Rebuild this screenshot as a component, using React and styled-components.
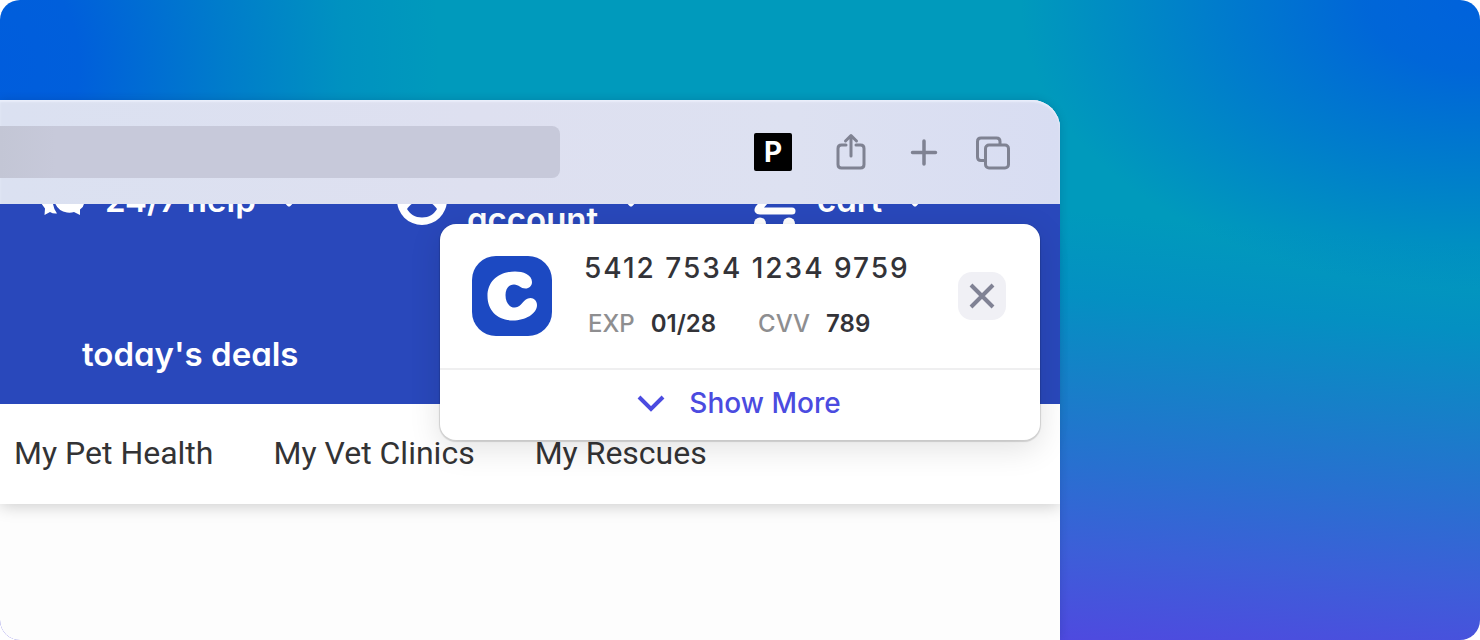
import React from "react";
import styled, { createGlobalStyle } from "styled-components";

const GlobalStyle = createGlobalStyle`
  * { box-sizing: border-box; }
  body { margin: 0; background: #fff; font-family: Inter, "Liberation Sans", sans-serif; }
  button { font: inherit; border: 0; padding: 0; cursor: pointer; }
  a { color: inherit; text-decoration: none; }
  svg { display: block; flex: none; }
`;

const Stage = styled.main`
  min-height: 100vh;
  display: flex;
  padding: 100px 420px 0 0;
  overflow: hidden;
  border-radius: 20px;
  background:
    radial-gradient(ellipse 440px 560px at 0% 10%, #005ddd 0%, #005fdb 18%, rgba(0, 98, 216, 0.55) 50%, rgba(0, 98, 216, 0.15) 78%, rgba(0, 98, 216, 0) 100%),
    radial-gradient(ellipse 460px 290px at 100% 0%, #0062dc 0%, rgba(0, 98, 218, 0.92) 25%, rgba(0, 98, 218, 0.5) 60%, rgba(0, 98, 218, 0) 100%),
    linear-gradient(185deg, #009abc 32%, #0490c2 43%, #1680c8 54%, #2870d0 65%, #3c5fd8 76%, #5048e0 89%);
`;

const Browser = styled.section`
  position: relative;
  flex: 1;
  display: flex;
  flex-direction: column;
  min-width: 0;
  background: #fdfdfd;
  border-radius: 0 28px 0 0;
  box-shadow: 0 0 8px rgba(0, 40, 90, 0.2);
`;

const Toolbar = styled.header`
  display: flex;
  align-items: center;
  justify-content: space-between;
  height: 104px;
  padding-right: 49px;
  border-radius: 0 28px 0 0;
  background: linear-gradient(90deg, #dbe1f1, #dee0f0 45%, #dde1f1 75%, #d8ddf2);
  box-shadow: inset 0 2px 2px rgba(240, 244, 255, 0.7);
`;

const AddressBar = styled.input`
  width: 560px;
  height: 52px;
  padding: 0 16px;
  border: 0;
  border-radius: 0 8px 8px 0;
  background: linear-gradient(90deg, #c3c6d5, #c7c9da 10%);
  font: 24px Inter, sans-serif;
`;

const Tools = styled.div`
  display: flex;
  align-items: center;
  gap: 37px;
`;

const ToolButton = styled.button`
  display: grid;
  place-items: center;
  width: ${(p) => p.$width}px;
  height: 40px;
  background: none;
  color: #7f8292;
`;

const PassButton = styled.button`
  width: 38px;
  height: 38px;
  border-radius: 2px;
  background: #000;
  color: #fff;
  font-size: 28px;
  font-weight: 700;
  line-height: 38px;
`;

const StoreHeader = styled.div`
  height: 200px;
  overflow: hidden;
  background: #2948bb;
  color: #fff;
  font-size: 33px;
  font-weight: 600;
  line-height: 40px;
  font-feature-settings: "cv11";
`;

const AccountRow = styled.div`
  display: grid;
  grid-template-columns: repeat(3, 356px);
  height: 56px;
  margin: -32px 0 0 41px;
`;

const AccountLink = styled.a`
  display: flex;
  align-items: center;
  gap: 20px;
  height: 56px;
`;

const AccountLabel = styled.span`
  padding-top: ${(p) => (p.$secondLine ? "38px" : "0")};
  padding-right: 4px;
  white-space: nowrap;
`;

const Deals = styled.a`
  display: inline-block;
  margin: 106px 0 0 82px;
`;

const PetNav = styled.nav`
  display: flex;
  gap: 60px;
  height: 100px;
  padding: 30px 0 0 14px;
  background: #fff;
  box-shadow: 0 2px 16px rgba(0, 0, 0, 0.2);
  clip-path: inset(0 0 -40px 0);
  color: #333335;
  font: 32px/38px Roboto, sans-serif;
  white-space: nowrap;
`;

const CardPopover = styled.aside`
  position: absolute;
  top: 124px;
  right: 20px;
  width: 600px;
  border-radius: 16px;
  background: #fff;
  box-shadow: 0 1px 1px 1px rgba(0, 0, 0, 0.14), 0 8px 32px rgba(0, 0, 0, 0.12);
`;

const CardTop = styled.div`
  display: flex;
  align-items: center;
  height: 144px;
  padding: 0 34px 0 32px;
`;

const CardInfo = styled.div`
  flex: 1;
  display: flex;
  flex-direction: column;
  gap: 24px;
  padding-left: 32px;
`;

const CardNumber = styled.div`
  color: #333338;
  font-size: 28px;
  font-weight: 500;
  line-height: 32px;
  letter-spacing: 2px;
  white-space: nowrap;
`;

const Details = styled.dl`
  display: flex;
  gap: 42px;
  margin: 0;
  padding-left: 4px;
  font-size: 24px;
  font-weight: 500;
  line-height: 32px;
`;

const Detail = styled.div`
  display: flex;
  gap: 16px;
  dt { color: #8e8e90; }
  dd { margin: 0; color: #333338; font-weight: 600; }
`;

const CloseButton = styled.button`
  display: grid;
  place-items: center;
  width: 48px;
  height: 48px;
  border-radius: 14px;
  background: #f0f0f5;
  color: #808294;
`;

const ShowMore = styled.button`
  display: flex;
  align-items: center;
  justify-content: center;
  gap: 24px;
  width: 100%;
  height: 72px;
  padding: 0 2px 4px 0;
  border-top: 2px solid #efeff0;
  border-radius: 0 0 16px 16px;
  background: none;
  color: #4b4be0;
  font-size: 28px;
  font-weight: 500;
`;

const SmallChevron = () => (
  <svg width="18" height="18" viewBox="0 0 18 18" fill="none" stroke="currentColor" strokeWidth="4" aria-hidden="true">
    <path d="M3 7.500l6 6 6-6" strokeLinecap="round" strokeLinejoin="round" />
  </svg>
);

const ChatIcon = () => (
  <svg width="44" height="56" viewBox="0 0 44 56" fill="currentColor" aria-hidden="true">
    <path d="M0 31C-1 12 14 6 26 12C16 16 10 24 12 32Q13 38 16 41.500Q12 42 9 40L3.500 43L4 36.500Z" />
    <path d="M14 31C14 22 20 17 28 17S43 23 43 31Q43 35 39 37.500L39 43L33 40Q30 41 26 40.500Q17 39 14 31Z" />
  </svg>
);

const PersonIcon = () => (
  <svg width="50" height="50" viewBox="0 0 50 50" fill="none" aria-hidden="true">
    <circle cx="25" cy="25" r="25" fill="currentColor" />
    <path d="M10 34C14 28 19 26 25 26S36 28 40 34C37 39 32 42.500 25 42.500S13 39 10 34Z" fill="#2948bb" />
    <circle cx="25" cy="15" r="7" fill="#2948bb" />
  </svg>
);

const CartIcon = () => (
  <svg width="44" height="56" viewBox="0 0 44 56" fill="currentColor" aria-hidden="true">
    <path d="M2 6h6l5 22L5.500 36.500Q4 39 7 39H39" fill="none" stroke="currentColor" strokeWidth="7" strokeLinecap="round" strokeLinejoin="round" />
    <circle cx="7" cy="51.500" r="6" />
    <circle cx="36" cy="51.500" r="6" />
  </svg>
);

export default function App() {
  return (
    <>
      <GlobalStyle />
      <Stage>
        <Browser>
          <Toolbar>
            <AddressBar type="text" aria-label="Address" />
            <Tools>
              <PassButton type="button">P</PassButton>
              <ToolButton type="button" aria-label="Share" $width={44}>
                <svg width="30" height="38" viewBox="0 0 30 38" fill="none" stroke="currentColor" strokeWidth="3" strokeLinecap="round" strokeLinejoin="round">
                  <path d="M10 12H5.500Q2 12 2 15.500V31.500Q2 35 5.500 35H24.500Q28 35 28 31.500V15.500Q28 12 24.500 12H20" />
                  <path d="M15 23V2.500M9.500 8L15 2.500L20.500 8" />
                </svg>
              </ToolButton>
              <ToolButton type="button" aria-label="New tab" $width={28}>
                <svg width="28" height="28" viewBox="0 0 28 28" fill="none" stroke="currentColor" strokeWidth="3.500" strokeLinecap="round">
                  <path d="M2.500 14.500H25.500M14 3V26" />
                </svg>
              </ToolButton>
              <ToolButton type="button" aria-label="Tab overview" $width={36}>
                <svg width="36" height="36" viewBox="0 0 36 36" fill="none" stroke="currentColor" strokeWidth="3" strokeLinejoin="round">
                  <rect x="10.500" y="11" width="23" height="23" rx="3.500" />
                  <path d="M10 26.500H6Q2.500 26.500 2.500 23V7.500Q2.500 4 6 4H21.500Q25 4 25 7.500V11" />
                </svg>
              </ToolButton>
            </Tools>
          </Toolbar>

          <StoreHeader>
            <AccountRow>
              <AccountLink href="#help">
                <ChatIcon />
                <AccountLabel>24/7 help</AccountLabel>
                <SmallChevron />
              </AccountLink>
              <AccountLink href="#account">
                <PersonIcon />
                <AccountLabel $secondLine>account</AccountLabel>
                <SmallChevron />
              </AccountLink>
              <AccountLink href="#cart">
                <CartIcon />
                <AccountLabel>cart</AccountLabel>
                <SmallChevron />
              </AccountLink>
            </AccountRow>
            <Deals href="#deals">today's deals</Deals>
          </StoreHeader>

          <PetNav>
            <a href="#health">My Pet Health</a>
            <a href="#clinics">My Vet Clinics</a>
            <a href="#rescues">My Rescues</a>
          </PetNav>

          <CardPopover>
            <CardTop>
              <svg width="80" height="80" viewBox="0 0 80 80" aria-hidden="true">
                <rect width="80" height="80" rx="24" fill="#1c49c2" />
                <path
                  d="M43 15.500C51 15.500 60 18.500 60 26C60 30 57 32.500 53.500 32.500C48.500 32.500 47 28.500 42 28.500C36.500 28.500 33.500 33 33.500 39C33.500 46 37 51.500 43 51.500C50 51.500 51 42 58.500 42C62 42 65 45 65 49C65 58 53 64.500 41 64.500C26 64.500 15.500 55 15.500 40C15.500 25 27 15.500 43 15.500Z"
                  fill="#fff"
                />
              </svg>
              <CardInfo>
                <CardNumber>5412 7534 1234 9759</CardNumber>
                <Details>
                  <Detail><dt>EXP</dt><dd>01/28</dd></Detail>
                  <Detail><dt>CVV</dt><dd>789</dd></Detail>
                </Details>
              </CardInfo>
              <CloseButton type="button" aria-label="Close">
                <svg width="26" height="26" viewBox="0 0 26 26" fill="none" stroke="currentColor" strokeWidth="4">
                  <path d="M2 2L24 24M24 2L2 24" />
                </svg>
              </CloseButton>
            </CardTop>
            <ShowMore type="button">
              <svg width="28" height="18" viewBox="0 0 28 18" fill="none" stroke="currentColor" strokeWidth="4" aria-hidden="true">
                <path d="M2 3L14 15L26 3" />
              </svg>
              <span>Show More</span>
            </ShowMore>
          </CardPopover>
        </Browser>
      </Stage>
    </>
  );
}
